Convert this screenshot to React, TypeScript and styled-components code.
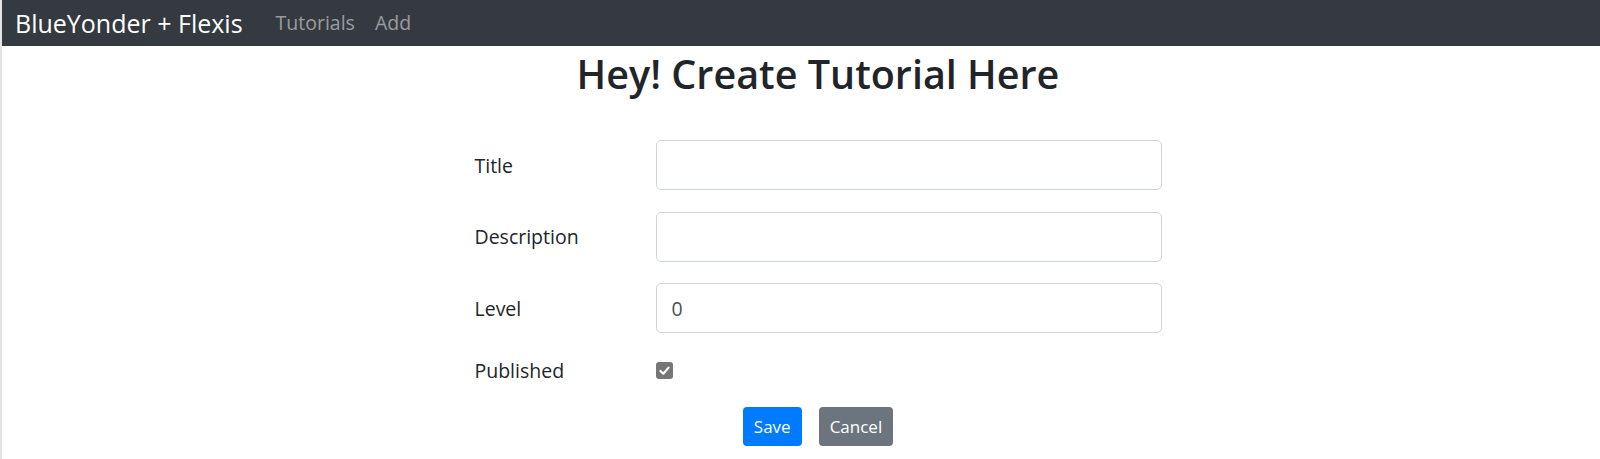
import React from "react";
import styled, { createGlobalStyle } from "styled-components";

const GlobalStyle = createGlobalStyle`
  html, body {
    margin: 0;
    padding: 0;
    background: #ffffff;
  }
  body {
    font-family: "Open Sans", "Noto Sans", "Liberation Sans", sans-serif;
    color: #212529;
  }
  * { box-sizing: border-box; }
`;

const Shell = styled.div`
  min-height: 459px;
  border-left: 2px solid #e4e4e4;
`;

const NavBar = styled.nav`
  height: 46px;
  background: #343a40;
  display: flex;
  align-items: center;
  padding-left: 13px;
`;

const Brand = styled.a`
  font-size: 25px;
  color: #ffffff;
  text-decoration: none;
  margin-right: 23px;
  line-height: 1;
  white-space: nowrap;
`;

const NavLink = styled.a`
  font-size: 19.5px;
  color: rgba(255, 255, 255, 0.5);
  text-decoration: none;
  padding: 0 10px;
  line-height: 1;
`;

const Main = styled.main`
  padding-left: 34px;
  display: flex;
  flex-direction: column;
  align-items: center;
`;

const Heading = styled.h2`
  margin: 4px 0 0;
  font-size: 39.5px;
  font-weight: 600;
  line-height: 48px;
  color: #212529;
`;

const Form = styled.form`
  width: 687px;
  margin-top: 42px;
  display: flex;
  flex-direction: column;
  gap: 21.5px;
`;

const Row = styled.div<{ $height?: number }>`
  display: grid;
  grid-template-columns: 181px 1fr;
  align-items: center;
  height: ${(p) => p.$height ?? 50}px;
`;

const Label = styled.label`
  font-size: 19.5px;
  color: #212529;
`;

const Input = styled.input`
  height: 50px;
  width: 100%;
  border: 1px solid #ced4da;
  border-radius: 5px;
  padding: 0 15px;
  font-family: inherit;
  font-size: 19.5px;
  color: #495057;
  background: #fff;
  outline: none;
`;

const CheckBox = styled.span`
  width: 17px;
  height: 17px;
  border-radius: 3px;
  background: #767676;
  display: flex;
  align-items: center;
  justify-content: center;
`;

const ButtonBar = styled.div`
  display: flex;
  justify-content: center;
  gap: 17px;
  margin-top: 20.5px;
`;

const Button = styled.button<{ $variant: "primary" | "secondary" }>`
  height: 39px;
  padding: 0 11px;
  border: none;
  border-radius: 4px;
  font-family: inherit;
  font-size: 17px;
  color: #ffffff;
  background: ${(p) => (p.$variant === "primary" ? "#007bff" : "#6c757d")};
  cursor: pointer;
`;

export default function App() {
  return (
    <>
      <GlobalStyle />
      <Shell>
        <NavBar>
          <Brand href="#">BlueYonder + Flexis</Brand>
          <NavLink href="#">Tutorials</NavLink>
          <NavLink href="#">Add</NavLink>
        </NavBar>
        <Main>
          <Heading>Hey! Create Tutorial Here</Heading>
          <Form onSubmit={(e) => e.preventDefault()}>
            <Row>
              <Label htmlFor="title">Title</Label>
              <Input id="title" type="text" />
            </Row>
            <Row>
              <Label htmlFor="description">Description</Label>
              <Input id="description" type="text" />
            </Row>
            <Row>
              <Label htmlFor="level">Level</Label>
              <Input id="level" type="text" defaultValue="0" />
            </Row>
            <Row $height={32}>
              <Label>Published</Label>
              <CheckBox role="checkbox" aria-checked="true">
                <svg width="13" height="13" viewBox="0 0 16 16">
                  <path
                    d="M3 8.5 L6.5 12 L13 4.5"
                    fill="none"
                    stroke="#ffffff"
                    strokeWidth="2.6"
                    strokeLinecap="round"
                    strokeLinejoin="round"
                  />
                </svg>
              </CheckBox>
            </Row>
          </Form>
          <ButtonBar>
            <Button $variant="primary">Save</Button>
            <Button $variant="secondary">Cancel</Button>
          </ButtonBar>
        </Main>
      </Shell>
    </>
  );
}
